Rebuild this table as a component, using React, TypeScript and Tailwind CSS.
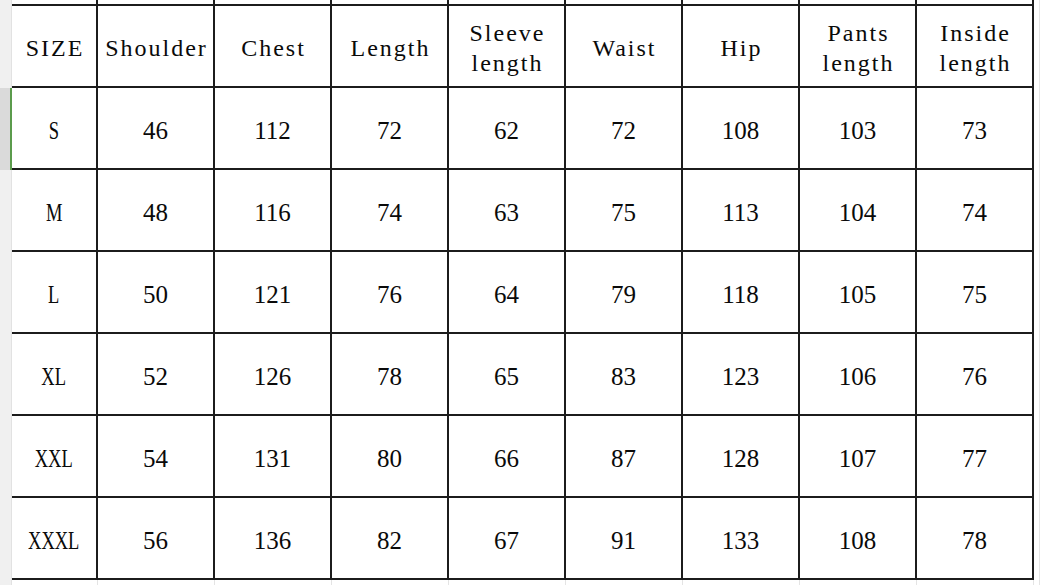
import React from "react";

const headers: string[][] = [
  ["SIZE"],
  ["Shoulder"],
  ["Chest"],
  ["Length"],
  ["Sleeve", "length"],
  ["Waist"],
  ["Hip"],
  ["Pants", "length"],
  ["Inside", "length"],
];

const rows: (string | number)[][] = [
  ["S", 46, 112, 72, 62, 72, 108, 103, 73],
  ["M", 48, 116, 74, 63, 75, 113, 104, 74],
  ["L", 50, 121, 76, 64, 79, 118, 105, 75],
  ["XL", 52, 126, 78, 65, 83, 123, 106, 76],
  ["XXL", 54, 131, 80, 66, 87, 128, 107, 77],
  ["XXXL", 56, 136, 82, 67, 91, 133, 108, 78],
];

// column widths, first col starts after the row-header strip
const widths = ["w-[86px]", "w-[117px]", "w-[117px]", "w-[117px]", "w-[117px]", "w-[117px]", "w-[117px]", "w-[117px]", "w-[117px]"];

const serif = "font-['Liberation_Serif',serif]";

function RowHead({ active }: { active?: boolean }) {
  return (
    <div
      className={
        active
          ? "w-[12px] shrink-0 bg-[#dadada] border-r-2 border-[#5b9b4c]"
          : "w-[12px] shrink-0 bg-[#f0f0f0] border-r border-[#e2e2e2]"
      }
    />
  );
}

export default function App() {
  return (
    <div className="w-[1042px] h-[585px] bg-white overflow-hidden flex flex-col">
      {/* cut-off row above the header */}
      <div className="flex h-[4px] shrink-0">
        <RowHead />
        {widths.map((w, i) => (
          <div key={i} className={`${w} shrink-0 border-r-2 border-[#1c1c1c]`} />
        ))}
        <div className="flex-1 border-r border-[#e4e4e4] mr-[2px]" />
      </div>

      {/* header row */}
      <div className="flex h-[84px] shrink-0">
        <RowHead />
        {headers.map((h, i) => (
          <div
            key={i}
            className={`${widths[i]} shrink-0 border-t-2 border-b-2 border-r-2 border-[#1c1c1c] flex flex-col items-center justify-center pt-[3px] leading-[30px] text-[24px] tracking-[2px] text-[#0a0a0a] ${serif}`}
          >
            {h.map((line) => (
              <span key={line} className="pl-[2px]">{line}</span>
            ))}
          </div>
        ))}
        <div className="flex-1 border-r border-[#e4e4e4] mr-[2px]" />
      </div>

      {rows.map((r, ri) => (
        <div key={ri} className="flex h-[82px] shrink-0">
          <RowHead active={ri === 0} />
          {r.map((v, i) => (
            <div
              key={i}
              className={`${widths[i]} shrink-0 border-b-2 border-r-2 border-[#1c1c1c] flex items-center justify-center pt-[6px] text-[25px] text-[#0a0a0a] ${serif}`}
            >
              {i === 0 ? <span className="inline-block scale-x-[0.74]">{v}</span> : v}
            </div>
          ))}
          <div className="flex-1 border-r border-[#e4e4e4] mr-[2px]" />
        </div>
      ))}

      {/* empty row below */}
      <div className="flex flex-1">
        <RowHead />
        {widths.map((w, i) => (
          <div key={i} className={`${w} shrink-0 border-r border-[#e4e4e4]`} />
        ))}
        <div className="flex-1 border-r border-[#e4e4e4] mr-[2px]" />
      </div>
    </div>
  );
}
